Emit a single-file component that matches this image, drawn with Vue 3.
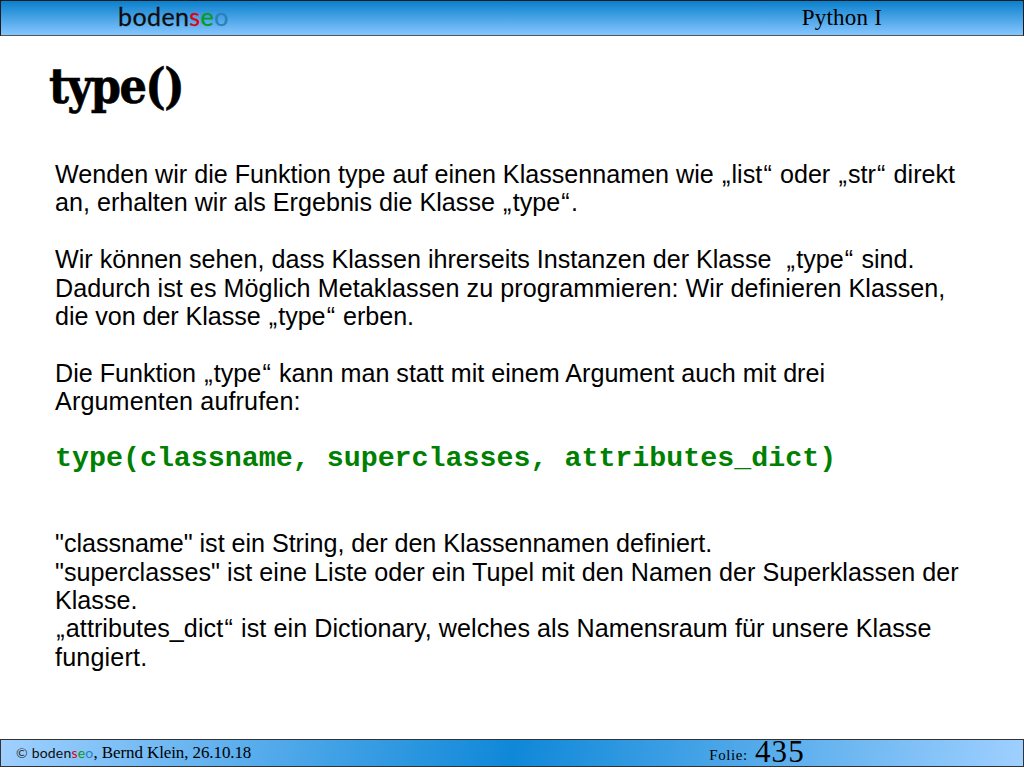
<script setup>
const paragraphs = [
  { id: 1, lines: [
    { t: 'Wenden wir die Funktion type auf einen Klassennamen wie „list“ oder „str“ direkt', ls: 0 },
    { t: 'an, erhalten wir als Ergebnis die Klasse „type“.', ls: 0 },
  ] },
  { id: 2, lines: [
    { t: 'Wir können sehen, dass Klassen ihrerseits Instanzen der Klasse  „type“ sind.', ls: 0 },
    { t: 'Dadurch ist es Möglich Metaklassen zu programmieren: Wir definieren Klassen,', ls: 0.067 },
    { t: 'die von der Klasse „type“ erben.', ls: -0.06 },
  ] },
  { id: 3, lines: [
    { t: 'Die Funktion „type“ kann man statt mit einem Argument auch mit drei', ls: 0 },
    { t: 'Argumenten aufrufen:', ls: 0.13 },
  ] },
]
const tail = [
  { t: '"classname" ist ein String, der den Klassennamen definiert.', ls: -0.03 },
  { t: '"superclasses" ist eine Liste oder ein Tupel mit den Namen der Superklassen der', ls: 0.04 },
  { t: 'Klasse.', ls: 0 },
  { t: '„attributes_dict“ ist ein Dictionary, welches als Namensraum für unsere Klasse', ls: 0.065 },
  { t: 'fungiert.', ls: 0.17 },
]
const parts = (t) => t.split(/([„“])/).filter(Boolean)
const isQuote = (s) => s === '„' || s === '“'
</script>

<template>
  <div class="slide">
    <header class="top">
      <div class="logo"><span>boden</span><span class="red">s</span><span class="green">e</span><span class="blue">o</span></div>
      <div class="course">Python I</div>
    </header>
    <main class="content">
      <h1 class="title">type()</h1>
      <div class="text">
        <p v-for="p in paragraphs" :key="p.id" class="para">
          <span v-for="l in p.lines" :key="l.t" class="line" :style="{ letterSpacing: l.ls + 'px' }"><span v-for="(s, i) in parts(l.t)" :key="i" :class="{ q: isQuote(s) }">{{ s }}</span></span>
        </p>
        <p class="code">type(classname, superclasses, attributes_dict)</p>
        <p class="para">
          <span v-for="l in tail" :key="l.t" class="line" :style="{ letterSpacing: l.ls + 'px' }"><span v-for="(s, i) in parts(l.t)" :key="i" :class="{ q: isQuote(s) }">{{ s }}</span></span>
        </p>
      </div>
    </main>
    <footer class="bottom">
      <div class="credit">
        <span class="copy">©</span>
        <span class="logo small"><span>boden</span><span class="red">s</span><span class="green">e</span><span class="blue">o</span></span><span class="author">, Bernd Klein, 26.10.18</span>
      </div>
      <div class="folie"><span class="folie-label">Folie:</span><span class="folie-num">435</span></div>
    </footer>
  </div>
</template>

<style>
html, body { margin: 0; background: #fff; }
</style>

<style scoped>
.slide {
  width: 1024px;
  height: 768px;
  display: flex;
  flex-direction: column;
  overflow: hidden;
  background: #fff;
  color: #000;
}
.top {
  box-sizing: border-box;
  height: 36px;
  border: 1px solid #1a1a1a;
  border-bottom-color: #555;
  background: linear-gradient(180deg, #0a80cc 0%, #86c6ff 100%);
  display: flex;
  align-items: center;
  padding-left: 117px;
}
.logo {
  font-family: "Lato", sans-serif;
  font-weight: 400;
  font-size: 25px;
  letter-spacing: 0.4px;
  line-height: 30px;
  margin-bottom: 5px;
  color: #0d0d0d;
  -webkit-text-stroke: 0.3px currentColor;
}
.red { color: #e00010; }
.green { color: #0a9a1a; }
.blue { color: #2a80b8; }
.course {
  font-family: "Liberation Serif", serif;
  font-size: 23px;
  letter-spacing: 0.2px;
  margin-left: auto;
  margin-right: 141px;
}
.content {
  flex: 1;
  display: flex;
  flex-direction: column;
}
.title {
  margin: 16px 0 0 49px;
  font-family: "DejaVu Serif", serif;
  font-stretch: condensed;
  font-weight: 700;
  font-size: 48px;
  line-height: 68px;
  letter-spacing: -1.6px;
  -webkit-text-stroke: 0.6px #000;
}
.text {
  margin: 40px 0 0 55px;
  font-family: "Liberation Sans", sans-serif;
  font-size: 25.13px;
  line-height: 28.4px;
}
.para { margin: 0 0 28.4px; }
.line { display: block; white-space: pre; }
.q { padding: 0 1.2px; }
.code {
  margin: 0 0 56.8px;
  font-family: "Liberation Mono", monospace;
  font-weight: 700;
  font-size: 28.3px;
  line-height: 28.4px;
  color: #008000;
  white-space: pre;
}
.bottom {
  box-sizing: border-box;
  height: 28px;
  margin-bottom: 1px;
  border: 1px solid #333;
  background: linear-gradient(100deg, #9fd0ff 0%, #0f88d8 50%, #9fd0ff 100%);
  display: flex;
  align-items: center;
  padding-left: 15px;
  font-family: "Liberation Serif", serif;
  font-size: 17px;
}
.credit { display: flex; align-items: baseline; white-space: pre; }
.copy { font-family: "Lato", sans-serif; font-size: 14px; color: #333; margin-right: 4px; }
.small { font-size: 14px; line-height: 20px; margin-bottom: 0; letter-spacing: 0.2px; -webkit-text-stroke: 0; }
.author { letter-spacing: -0.1px; }
.folie {
  margin-left: auto;
  margin-right: 218px;
  margin-top: 2px;
  line-height: 22px;
  white-space: nowrap;
}
.folie-label { font-size: 15px; letter-spacing: 0.6px; margin-right: 7px; vertical-align: 2px; }
.folie-num { font-size: 31px; letter-spacing: 1.2px; }
</style>
